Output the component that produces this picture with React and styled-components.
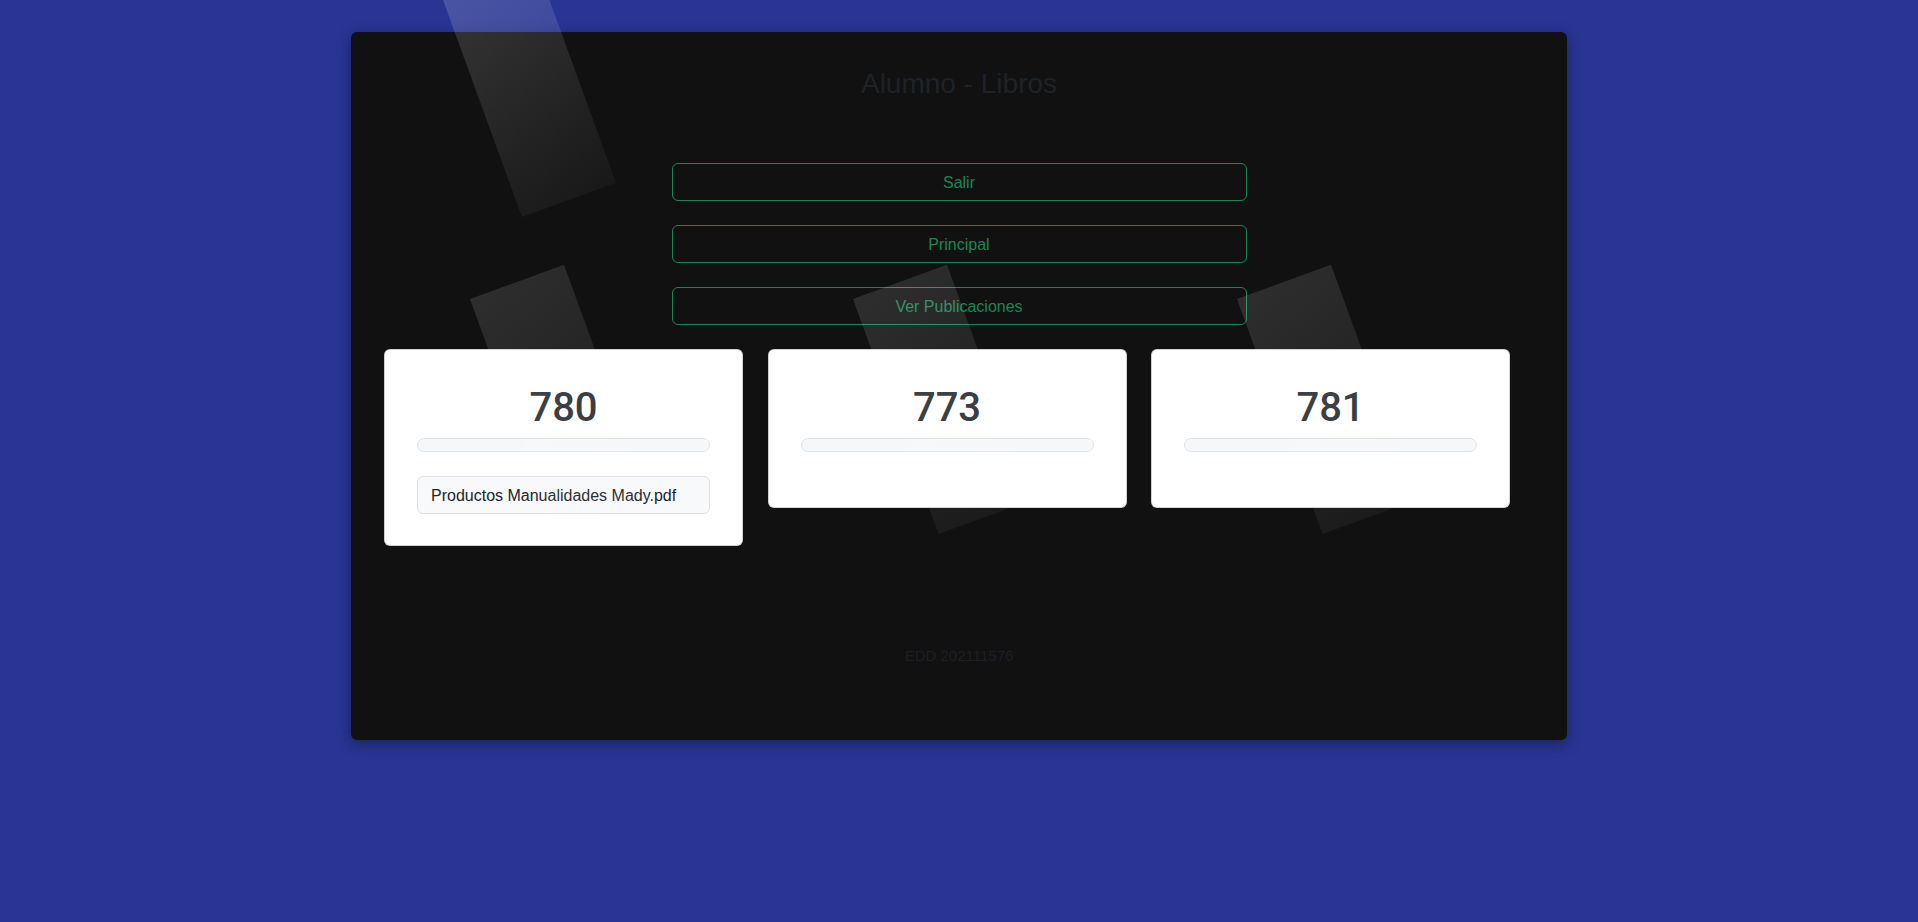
import React from "react";
import styled, { createGlobalStyle } from "styled-components";

const GlobalStyle = createGlobalStyle`
  html, body {
    margin: 0;
    padding: 0;
    background: #283593;
    min-height: 100vh;
  }
  body {
    font-family: "Liberation Sans", Arial, sans-serif;
    color: #212529;
  }
  * { box-sizing: border-box; }
`;

const Page = styled.div`
  position: relative;
  min-height: 100vh;
  padding: 32px 0;
`;

const Panel = styled.main`
  width: 1216px;
  height: 708px;
  margin: 0 auto;
  background: #111111;
  border-radius: 6px;
  box-shadow: 0 4px 14px rgba(0, 0, 0, 0.35);
  display: flex;
  flex-direction: column;
  align-items: center;
  padding-top: 35px;
`;

const Title = styled.h2`
  margin: 0 0 62px;
  font-size: 28px;
  line-height: 34px;
  font-weight: 400;
  color: #1f2327;
`;

const ButtonStack = styled.div`
  width: 575px;
  display: flex;
  flex-direction: column;
  gap: 24px;
`;

const OutlineButton = styled.button`
  height: 38px;
  width: 100%;
  padding: 2px 12px 0;
  background: transparent;
  border: 1px solid #198754;
  border-radius: 6px;
  color: #198754;
  font-family: "Liberation Sans", Arial, sans-serif;
  font-size: 16px;
  cursor: pointer;
`;

const CardRow = styled.section`
  align-self: stretch;
  margin-top: 24px;
  padding-left: 33px;
  display: grid;
  grid-template-columns: repeat(3, 359px);
  column-gap: 24.5px;
  align-items: start;
`;

const Card = styled.div`
  background: #fff;
  border: 1px solid rgba(0, 0, 0, 0.175);
  border-radius: 6px;
  padding: 32px 32px 31px;
  text-align: center;
`;

const Count = styled.h1`
  margin: 0 0 8px;
  padding-top: 2px;
  height: 48px;
  font-family: Roboto, "Liberation Sans", sans-serif;
  font-size: 40px;
  line-height: 48px;
  font-weight: 500;
  color: #2b2f33;
`;

const Bar = styled.div`
  height: 14px;
  margin-bottom: 24px;
  background: #f6f7f9;
  border: 1px solid #dfe2e6;
  border-radius: 7px;
`;

const FileField = styled.div`
  height: 38px;
  display: flex;
  align-items: center;
  padding: 1px 13px 0;
  background: #f8f9fa;
  border: 1px solid #dee2e6;
  border-radius: 6px;
  font-size: 16px;
  color: #212529;
  text-align: left;
`;

const Footer = styled.p`
  margin: 98px 0 0;
  font-size: 15px;
  line-height: 24px;
  color: #1d1f22;
`;

const Decor = styled.div`
  position: absolute;
  inset: 0;
  overflow: hidden;
  pointer-events: none;
`;

const Square = styled.span`
  position: absolute;
  left: ${({ $x }) => $x}px;
  top: ${({ $y }) => $y}px;
  width: 100px;
  height: ${({ $h }) => $h}px;
  transform-origin: ${({ $origin }) => $origin};
  transform: rotate(-20deg);
  background: linear-gradient(
    160deg,
    rgba(255, 255, 255, ${({ $from }) => $from}),
    rgba(255, 255, 255, ${({ $to }) => $to})
  );
`;

const cards = [
  { id: 780, file: "Productos Manualidades Mady.pdf" },
  { id: 773 },
  { id: 781 },
];

const squares = [
  { x: 522, y: 217 - 260, h: 260, origin: "0 100%", from: 0.17, to: 0.03 },
  { x: 470, y: 299, h: 250, origin: "0 0", from: 0.12, to: 0.04 },
  { x: 853, y: 299, h: 250, origin: "0 0", from: 0.12, to: 0.04 },
  { x: 1237, y: 299, h: 250, origin: "0 0", from: 0.12, to: 0.04 },
];

export default function App() {
  return (
    <>
      <GlobalStyle />
      <Page>
        <Panel>
          <Title>Alumno - Libros</Title>
          <ButtonStack>
            <OutlineButton>Salir</OutlineButton>
            <OutlineButton>Principal</OutlineButton>
            <OutlineButton>Ver Publicaciones</OutlineButton>
          </ButtonStack>
          <CardRow>
            {cards.map((c) => (
              <Card key={c.id}>
                <Count>{c.id}</Count>
                <Bar />
                {c.file && <FileField>{c.file}</FileField>}
              </Card>
            ))}
          </CardRow>
          <Footer>EDD 202111576</Footer>
        </Panel>
        <Decor>
          {squares.map((s, i) => (
            <Square
              key={i}
              $x={s.x}
              $y={s.y}
              $h={s.h}
              $origin={s.origin}
              $from={s.from}
              $to={s.to}
            />
          ))}
        </Decor>
      </Page>
    </>
  );
}
